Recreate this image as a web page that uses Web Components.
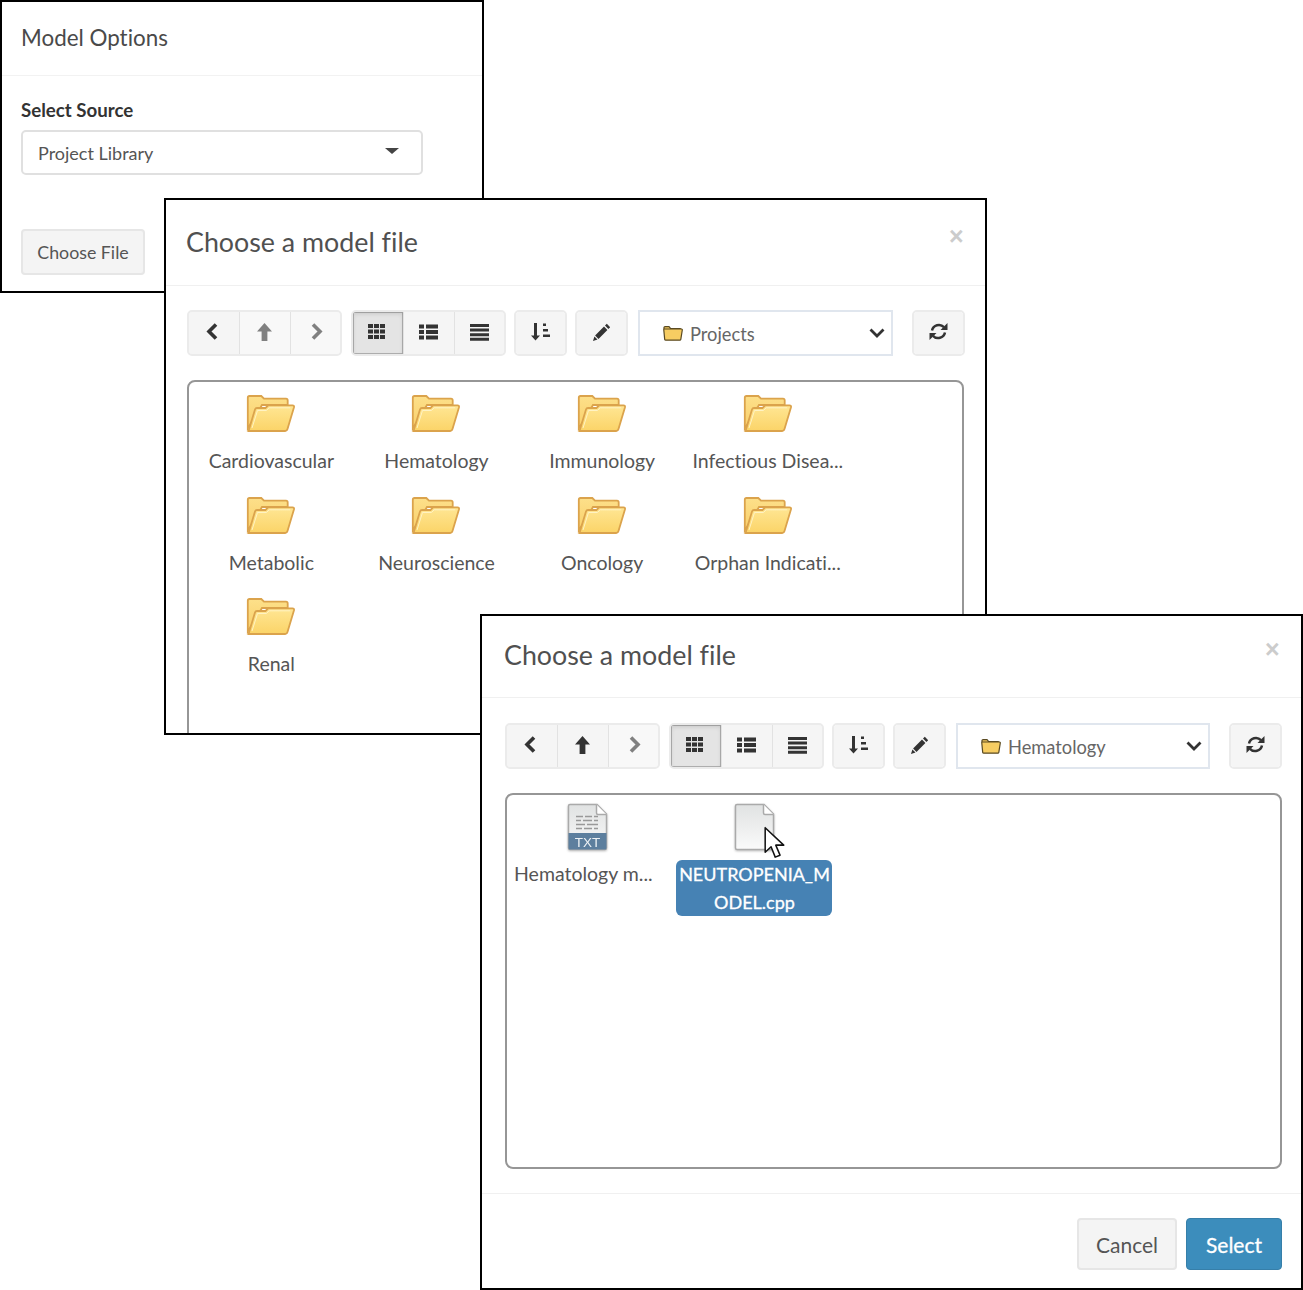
<!DOCTYPE html>
<html>
<head>
<meta charset="utf-8">
<title>Choose a model file</title>
<style>
  html, body { margin: 0; background: #fff; }
  body { width: 1303px; height: 1290px; position: relative; overflow: hidden; font-family: Lato, "Noto Sans", sans-serif; font-variant-ligatures: none; }
</style>
</head>
<body>
<app-window style="--x:0px;--y:0px;--w:484px;--h:293px">
  <model-options></model-options>
</app-window>

<app-window style="--x:164px;--y:198px;--w:823px;--h:537px">
  <file-dialog heading="Choose a model file" folder="Projects" panel-height="400">
    <file-tile kind="folder">Cardiovascular</file-tile>
    <file-tile kind="folder">Hematology</file-tile>
    <file-tile kind="folder">Immunology</file-tile>
    <file-tile kind="folder">Infectious Disea...</file-tile>
    <file-tile kind="folder">Metabolic</file-tile>
    <file-tile kind="folder">Neuroscience</file-tile>
    <file-tile kind="folder">Oncology</file-tile>
    <file-tile kind="folder">Orphan Indicati...</file-tile>
    <file-tile kind="folder">Renal</file-tile>
  </file-dialog>
</app-window>

<app-window style="--x:480px;--y:614px;--w:823px;--h:676px">
  <file-dialog heading="Choose a model file" folder="Hematology" up-enabled footer panel-height="376"
    style="--head:82px;--bar-top:25px;--pad-l:23px;--pad-r:19px;--title-top:-2px;--close-top:18px;--select-w:254px;--foot-gap:24px">
    <file-tile kind="txt" style="--art-x:-2px;--label-x:-6px">Hematology m...</file-tile>
    <file-tile kind="doc" selected pointer>NEUTROPENIA_MODEL.cpp</file-tile>
  </file-dialog>
</app-window>

<script>
const icons = {
  left: `<path d="M11 2.500 4 9.500l7 7" fill="none" stroke="currentColor" stroke-width="3.600"/>`,
  up: `<path d="M9.500 1 17 9.600h-4.600V19H6.600V9.600H2z" fill="currentColor"/>`,
  right: `<path d="M7 2.500l7 7-7 7" fill="none" stroke="currentColor" stroke-width="3.600"/>`,
  th: `<path d="M-1 2h5v4h-5zM5 2h5v4H5zM11 2h5v4h-5zM-1 7.500h5v4h-5zM5 7.500h5v4H5zM11 7.500h5v4h-5zM-1 13h5v4h-5zM5 13h5v4H5zM11 13h5v4h-5z" fill="currentColor"/>`,
  list: `<path d="M0 2.500h5V6.500H0zM7 2.500h12V6.500H7zM0 8h5v4H0zM7 8h12v4H7zM0 13.500h5v4H0zM7 13.500h12v4H7z" fill="currentColor"/>`,
  lines: `<path d="M0 2h19v3H0zM0 6.600h19v3H0zM0 11.200h19v3H0zM0 15.800h19v3H0z" fill="currentColor"/>`,
  sort: `<path d="M3 1h3v12.500h3L4.500 18.500 0 13.500h3zM12 1.500h3v2.600h-3zM12 7h5v2.600h-5zM12 12.500h7v2.600h-7z" fill="currentColor"/>`,
  pencil: `<path d="M14.800 1.800l3.400 3.400-1.800 1.800-3.400-3.400zM12 4.600 15.400 8 6.500 16.900 3.100 13.500zM2.400 14.500l3.100 3.100-4.500 1.400z" fill="currentColor"/>`,
  refresh: `<path d="M3 8.500A7 7 0 0 1 15 5.200" fill="none" stroke="currentColor" stroke-width="2.500"/><path d="M18.500 1v7h-7z" fill="currentColor"/><path d="M16 10.500A7 7 0 0 1 4 13.800" fill="none" stroke="currentColor" stroke-width="2.500"/><path d="M.5 18v-7h7z" fill="currentColor"/>`,
};

class AppWindow extends HTMLElement {
  constructor() {
    super();
    this.root = this.attachShadow({ mode: "open" });
    this.root.innerHTML = `
      <style>
        :host {
          display: block;
          position: absolute;
          left: var(--x);
          top: var(--y);
          width: var(--w);
          height: var(--h);
          box-sizing: border-box;
          border: 2px solid #000;
          background: #fff;
          overflow: hidden;
        }
      </style>
      <slot></slot>`;
  }
}

class ModelOptions extends HTMLElement {
  constructor() {
    super();
    this.root = this.attachShadow({ mode: "open" });
    this.root.innerHTML = `
      <style>
        :host { display: block; color: #4a4a4a; }
        header { height: 74px; box-sizing: border-box; padding: 0 19px; display: flex; align-items: center; border-bottom: 1px solid #f2f2f2; font-size: 22.400px; }
        h4 { margin: 0; font: inherit; position: relative; top: -1px; }
        .body { padding: 23px 19px 0; }
        label { display: block; font-size: 18.700px; line-height: 22px; font-weight: 700; color: #333; }
        .select { margin-top: 9px; width: 402px; height: 45px; box-sizing: border-box; border: 2px solid #e0e0e0; border-radius: 5px; padding: 0 22px 0 15px; display: flex; align-items: center; justify-content: space-between; font-size: 18px; color: #555; }
        .select i { display: block; width: 0; height: 0; border: 7px solid transparent; border-top: 6px solid #444; border-bottom: 0; margin-top: -3px; }
        button { display: block; margin-top: 54px; width: 124px; height: 46px; padding: 0; background: #f4f4f4; border: 2px solid #e6e6e6; border-radius: 4px; font: inherit; font-size: 17.800px; color: #555; }
      </style>
      <header><h4>Model Options</h4></header>
      <div class="body">
        <label>Select Source</label>
        <div class="select"><span>Project Library</span><i></i></div>
        <button>Choose File</button>
      </div>`;
  }
}

class ToolBtn extends HTMLElement {
  constructor() {
    super();
    this.root = this.attachShadow({ mode: "open" });
  }
  connectedCallback() {
    const icon = this.getAttribute("icon");
    this.root.innerHTML = `
      <style>
        :host { display: flex; align-items: center; justify-content: center; width: 50.330px; height: 100%; background: #f5f5f5; color: #333; box-sizing: border-box; }
        :host(:only-child) { width: 49px; }
        :host([muted]) { color: #808080; background: #f8f8f8; }
        :host([active]) { background: #e4e4e4; box-shadow: inset 0 2px 4px rgba(0,0,0,.12), inset 0 0 0 1px #b0b0b0; }
        :host(:not(:first-child)) { border-left: 1px solid #e2e2e2; }
        svg { display: block; width: 19px; height: 20px; margin-top: -2px; overflow: visible; }
      </style>
      <svg viewBox="0 0 19 20">${icons[icon]}</svg>`;
  }
}

class ToolGroup extends HTMLElement {
  constructor() {
    super();
    this.root = this.attachShadow({ mode: "open" });
    this.root.innerHTML = `
      <style>
        :host { display: flex; flex: none; height: 46px; box-sizing: border-box; border: 2px solid #ebebeb; border-radius: 5px; overflow: hidden; background: #f5f5f5; }
      </style>
      <slot></slot>`;
  }
}

class FolderSelect extends HTMLElement {
  constructor() {
    super();
    this.root = this.attachShadow({ mode: "open" });
    this.root.innerHTML = `
      <style>
        :host { display: flex; flex: none; align-items: center; width: var(--select-w, 255px); height: 46px; box-sizing: border-box; border: 2px solid #e0e6ee; padding: 0 6px 0 23px; font-size: 18.300px; color: #666; background: #fff; }
        .name { margin-left: 7px; flex: 1; padding-top: 2px; }
        svg { display: block; }
      </style>
      <svg width="20" height="15" viewBox="0 0 20 15"><path d="M1 3V1.500C1 1 1.400.7 2 .7h4L7.500 2.500H17c.6 0 1 .4 1 1V4" fill="#f1c75d" stroke="#5a4a22" stroke-width="1.200"/><path d="M1 3h17.500c.6 0 .9.400.8 1l-1.500 9.300c-.1.600-.5.900-1 .9H2.800c-.6 0-1-.3-1.100-.9L.8 4c-.1-.6.100-1 .2-1z" fill="#f7cd62" stroke="#5a4a22" stroke-width="1.200"/></svg>
      <span class="name"><slot></slot></span>
      <svg width="16" height="12" viewBox="0 0 16 12"><path d="M1.500 2.500 8 9l6.500-6.500" fill="none" stroke="#333" stroke-width="2.800"/></svg>`;
  }
}

class FileTile extends HTMLElement {
  constructor() {
    super();
    this.root = this.attachShadow({ mode: "open" });
  }
  artwork(kind) {
    if (kind === "folder") {
      return `<svg width="50" height="40" viewBox="0 0 50 40">
        <defs>
          <linearGradient id="back" x1="0" y1="0" x2="0" y2="1"><stop offset="0" stop-color="#fde08a"/><stop offset="1" stop-color="#f9cf6a"/></linearGradient>
          <linearGradient id="front" x1="0" y1="0" x2="0" y2="1"><stop offset="0" stop-color="#ffe694"/><stop offset="1" stop-color="#fbd468"/></linearGradient>
        </defs>
        <path d="M1.800 34.500V3.800C1.800 2.800 2.500 2 3.500 2h11.800l2.700 2.700h22c1 0 1.700.7 1.700 1.700V11H16z" fill="url(#back)" stroke="#dba34c" stroke-width="1.800"/>
        <path d="M2.500 37 9 15.500c.3-1 1-1.500 2-1.500h8.500l2.700-2.700h24.300c1.200 0 1.800.8 1.500 1.900L41.500 35c-.3 1.200-1 2-2.300 2z" fill="url(#front)" stroke="#dba34c" stroke-width="1.800"/>
        <path d="M6 34 11.500 16.500h9l2.700-2.700h21" fill="none" stroke="#fff3c4" stroke-width="1"/>
      </svg>`;
    }
    const sheet = `<defs><linearGradient id="paper" x1="0" y1="0" x2="0" y2="1"><stop offset="0" stop-color="#e0e2e2"/><stop offset="1" stop-color="#fafafa"/></linearGradient></defs>
      <path d="M1.500 3c0-.9.600-1.500 1.500-1.500h27L39.500 11v34c0 .9-.6 1.500-1.500 1.500H3c-.9 0-1.500-.6-1.500-1.500z" fill="url(#paper)" stroke="#aaa" stroke-width="1.500"/>
      <path d="M29.500 1.500V10c0 1 .6 1.500 1.500 1.500h8.500" fill="#fff" stroke="#aaa" stroke-width="1.500"/>`;
    if (kind === "txt") {
      return `<svg class="sheet" width="41" height="48" viewBox="0 0 41 48">${sheet}
        <path d="M9 13.500h7M18 13.500h7M27 13.500h4M9 17.500h5M16 17.500h9M27 17.500h4M9 21.500h9M20 21.500h11M9 25.500h6M17 25.500h8M27 25.500h4" stroke="#999" stroke-width="1.300"/>
        <path d="M1.500 30h38v15c0 .9-.6 1.500-1.500 1.500H3c-.9 0-1.500-.6-1.500-1.500z" fill="#5d7f9e"/>
        <text x="20.500" y="43.500" text-anchor="middle" font-family="Liberation Sans, sans-serif" font-size="13.500" fill="#eef2f5">TXT</text>
      </svg>`;
    }
    return `<svg class="sheet" width="41" height="48" viewBox="0 0 41 48">${sheet}</svg>`;
  }
  connectedCallback() {
    const kind = this.getAttribute("kind");
    const pointer = this.hasAttribute("pointer")
      ? `<svg class="pointer" width="24" height="35" viewBox="0 0 22 32"><path d="M2 1.500V24l5.400-5 3.800 9.500 4.400-1.800-3.900-9.200H19z" fill="#fff" stroke="#111" stroke-width="1.400" stroke-linejoin="round"/></svg>`
      : "";
    this.root.innerHTML = `
      <style>
        :host { display: block; height: 101.500px; position: relative; }
        .art { height: 65px; padding-top: 12px; box-sizing: border-box; display: flex; justify-content: center; align-items: flex-start; margin-left: calc(var(--art-x, 0px) * 2); }
        .sheet { margin-top: -4px; filter: drop-shadow(0 1px 1px rgba(0,0,0,.25)); }
        .label { display: block; box-sizing: border-box; width: 156px; margin: 0 auto; padding: 0 2px; text-align: center; font-size: 19.500px; line-height: 28px; color: #555; word-break: break-all; }
        :host(:not([selected])) .label { translate: var(--label-x, 0px) 0; }
        :host([selected]) .label { background: #4682b4; color: #fff; border-radius: 6px; font-size: 18px; -webkit-text-stroke: .3px #fff; }
        .pointer { position: absolute; left: 91px; top: 31px; }
      </style>
      <div class="art">${this.artwork(kind)}</div>
      <span class="label"><slot></slot></span>
      ${pointer}`;
  }
}

class FileDialog extends HTMLElement {
  constructor() {
    super();
    this.root = this.attachShadow({ mode: "open" });
  }
  connectedCallback() {
    const upMuted = this.hasAttribute("up-enabled") ? "" : "muted";
    const footer = this.hasAttribute("footer")
      ? `<footer><button>Cancel</button><button class="primary">Select</button></footer>`
      : "";
    this.root.innerHTML = `
      <style>
        :host { display: block; color: #505050; }
        header { position: relative; height: var(--head, 86px); box-sizing: border-box; padding: 0 21px 0 calc(var(--pad-l, 21px) - 1px); display: flex; align-items: center; border-bottom: 1px solid #f0f0f0; font-size: 26.800px; }
        h4 { margin: 0; font: inherit; position: relative; top: var(--title-top, -1px); }
        .close { position: absolute; right: 21.500px; top: var(--close-top, 21px); font: 700 25px/30px "Liberation Sans", sans-serif; color: #ccc; }
        .bar { display: flex; align-items: center; padding: var(--bar-top, 24px) var(--pad-r, 21px) 24px var(--pad-l, 21px); }
        .views { margin-left: 9px; }
        .sort, .edit { margin-left: 8px; }
        folder-select { margin-left: 10px; }
        .reload { margin-left: 19px; }
        .files { display: grid; grid-template-columns: 164.670px repeat(3, 165.670px); align-content: start; height: var(--panel-height); margin: 0 var(--pad-r, 21px) 0 var(--pad-l, 21px); box-sizing: border-box; border: 2px solid #969696; border-radius: 8px; }
        footer { display: flex; justify-content: flex-end; gap: 9px; margin-top: var(--foot-gap, 25px); padding: 24px var(--pad-r, 21px) 0; border-top: 1px solid #f0f0f0; }
        button { height: 52px; padding: 0; width: 100px; background: #f4f4f4; border: 2px solid #e6e6e6; border-radius: 4px; font: inherit; font-size: 21px; color: #555; }
        button.primary { width: 96px; background: #3c8dbc; border: 1px solid #367fa9; color: #fff; -webkit-text-stroke: .3px #fff; }
      </style>
      <header>
        <h4>${this.getAttribute("heading")}</h4>
        <span class="close">&times;</span>
      </header>
      <div class="bar">
        <tool-group>
          <tool-btn icon="left"></tool-btn>
          <tool-btn icon="up" ${upMuted}></tool-btn>
          <tool-btn icon="right" muted></tool-btn>
        </tool-group>
        <tool-group class="views">
          <tool-btn icon="th" active></tool-btn>
          <tool-btn icon="list"></tool-btn>
          <tool-btn icon="lines"></tool-btn>
        </tool-group>
        <tool-group class="sort"><tool-btn icon="sort"></tool-btn></tool-group>
        <tool-group class="edit"><tool-btn icon="pencil"></tool-btn></tool-group>
        <folder-select>${this.getAttribute("folder")}</folder-select>
        <tool-group class="reload"><tool-btn icon="refresh"></tool-btn></tool-group>
      </div>
      <div class="files" style="--panel-height:${this.getAttribute("panel-height")}px"><slot></slot></div>
      ${footer}`;
  }
}

customElements.define("app-window", AppWindow);
customElements.define("model-options", ModelOptions);
customElements.define("tool-btn", ToolBtn);
customElements.define("tool-group", ToolGroup);
customElements.define("folder-select", FolderSelect);
customElements.define("file-tile", FileTile);
customElements.define("file-dialog", FileDialog);
</script>
</body>
</html>
